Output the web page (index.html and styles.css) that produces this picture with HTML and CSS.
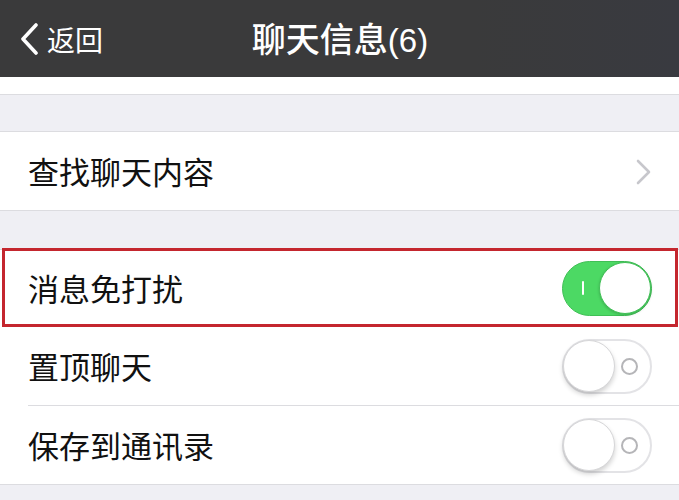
FILE: index.html
```html
<!DOCTYPE html>
<html lang="zh-CN">
<head>
<meta charset="utf-8">
<link rel="stylesheet" href="styles.css">
</head>
<body>
<div class="page">
  <header class="nav">
    <div class="back">
      <svg class="back-icon" width="20" height="32" viewBox="0 0 20 32"><path d="M17 2 L4 16 L17 30" fill="none" stroke="#fff" stroke-width="3.6" stroke-linecap="round" stroke-linejoin="round"/></svg>
      <span class="back-text">返回</span>
    </div>
    <div class="title">聊天信息<span class="paren">(6)</span></div>
  </header>
  <div class="strip"></div>
  <div class="gap gap1"></div>
  <section class="group">
    <div class="row">
      <span class="label">查找聊天内容</span>
      <svg class="chev" width="16" height="26" viewBox="0 0 16 26"><path d="M2 2 L13 13 L2 24" fill="none" stroke="#c7c7cc" stroke-width="2.6" stroke-linecap="round" stroke-linejoin="round"/></svg>
    </div>
  </section>
  <div class="gap gap2"></div>
  <section class="group">
    <div class="row row1">
      <span class="label">消息免打扰</span>
      <span class="toggle on"><span class="mark"></span><span class="knob"></span></span>
      <span class="highlight"></span>
    </div>
    <div class="row row2 sep">
      <span class="label">置顶聊天</span>
      <span class="toggle off"><span class="knob"></span><span class="ring"></span></span>
    </div>
    <div class="row row3">
      <span class="label">保存到通讯录</span>
      <span class="toggle off"><span class="knob"></span><span class="ring"></span></span>
    </div>
  </section>
</div>
</body>
</html>
```

FILE: styles.css
```css
* { box-sizing: border-box; }
html, body { margin: 0; padding: 0; }
body {
  width: 679px;
  height: 500px;
  overflow: hidden;
  background: #efeff4;
  font-family: "Noto Sans CJK SC", "Noto Sans", sans-serif;
}
.page { display: flex; flex-direction: column; }
.nav {
  height: 77px;
  background: linear-gradient(90deg, #3a3a3b 0%, #3a3a3b 70%, #393a40 100%);
  display: flex;
  align-items: center;
  justify-content: center;
  position: relative;
  color: #fff;
}
.back {
  position: absolute;
  left: 19px;
  top: 0;
  height: 77px;
  display: flex;
  align-items: center;
  gap: 8px;
}
.back-icon { margin-top: 1px; }
.back-text { font-size: 28px; line-height: 1; font-weight: 400; }
.title {
  font-size: 34px;
  font-weight: 500;
  line-height: 1;
  margin-left: 1px;
}
.paren {
  font-family: "Liberation Sans", "Noto Sans", sans-serif;
  font-weight: 400;
  font-size: 33px;
}
.strip {
  height: 18px;
  background: #fff;
  border-bottom: 1px solid #dcdce0;
}
.gap1 { height: 36px; }
.gap2 { height: 38px; }
.group {
  background: #fff;
  border-top: 1px solid #dcdce0;
  border-bottom: 1px solid #dcdce0;
}
.row {
  height: 78px;
  display: flex;
  align-items: center;
  justify-content: space-between;
  padding: 0 27px 0 28px;
  position: relative;
}
.label {
  font-size: 31px;
  line-height: 1;
  color: #111;
  margin-top: -2px;
}
.chev { margin-top: 2px; }
.row1 { height: 76px; }
.row2 { height: 80px; }
.row3 { height: 78px; }
.sep::after {
  content: "";
  position: absolute;
  left: 28px;
  right: 0;
  bottom: 0;
  height: 1px;
  background: #dcdce0;
}
.highlight {
  position: absolute;
  left: 2px;
  right: 1px;
  top: -2px;
  bottom: -1px;
  border: 3.5px solid #c4262e;
  pointer-events: none;
}
.toggle {
  width: 90px;
  height: 55px;
  border-radius: 28px;
  position: relative;
  display: block;
}
.toggle.on {
  background: #4cd964;
  border: 1.5px solid #3fbf55;
}
.toggle.off {
  background: #fff;
  border: 2px solid #e3e3e6;
}
.knob {
  position: absolute;
  width: 52px;
  height: 52px;
  border-radius: 50%;
  background: #fff;
  top: 0;
}
.toggle.on .knob {
  right: 0;
  top: 0;
  border: 1.5px solid #3fbf55;
  box-shadow: 0 1px 3px rgba(0,0,0,0.2);
}
.toggle.off .knob {
  left: -1px;
  top: -1px;
  border: 1px solid #d6d6d8;
  box-shadow: 0 3px 5px rgba(0,0,0,0.18);
}
.mark {
  position: absolute;
  left: 19px;
  top: 19px;
  width: 2px;
  height: 14px;
  background: #fff;
  border-radius: 1px;
}
.ring {
  position: absolute;
  right: 12px;
  top: 17px;
  width: 17px;
  height: 17px;
  border-radius: 50%;
  border: 2px solid #b5b5b8;
}
```
